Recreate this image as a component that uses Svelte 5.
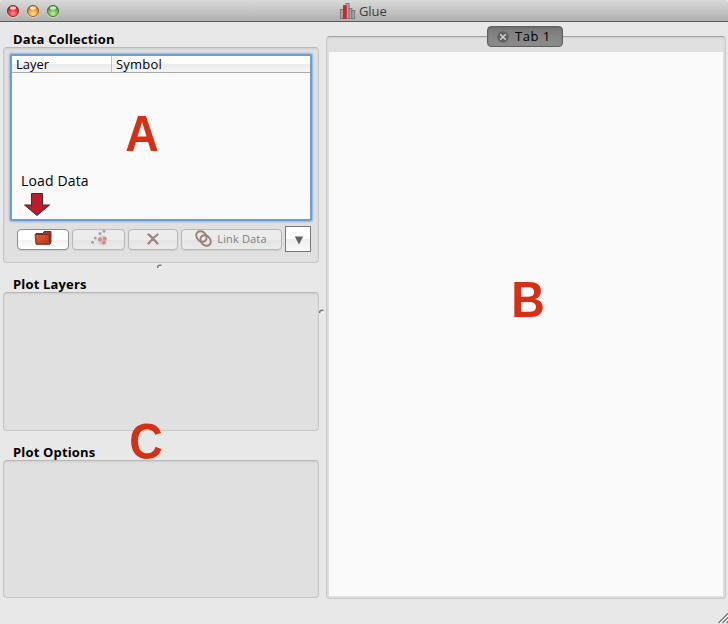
<script>
  const lights = [
    { name: 'close', hi: '#ff8a86', mid: '#ee3d40', edge: '#8c2226' },
    { name: 'minimise', hi: '#ffe08a', mid: '#f0a43c', edge: '#96601f' },
    { name: 'zoom', hi: '#c8f0a0', mid: '#76bd58', edge: '#3f762d' }
  ];
</script>

<div class="window">
  <header class="titlebar">
    <div class="lights">
      {#each lights as l}
        <svg width="14" height="14" viewBox="0 0 14 14" aria-label={l.name}>
          <defs>
            <radialGradient id={l.name} cx=".5" cy=".75" r=".7">
              <stop offset="0" stop-color={l.hi} />
              <stop offset=".55" stop-color={l.mid} />
              <stop offset="1" stop-color={l.edge} />
            </radialGradient>
          </defs>
          <circle cx="7" cy="7.6" r="6.2" fill="#ddd" />
          <circle cx="7" cy="7" r="5.6" fill="url(#{l.name})" stroke={l.edge} stroke-width=".9" />
          <ellipse cx="7" cy="4" rx="3" ry="1.7" fill="#fff" opacity=".75" />
        </svg>
      {/each}
    </div>
    <div class="title">
      <svg width="16" height="17" viewBox="0 0 16 17">
        <g stroke="#707070" stroke-width=".8" fill="#a6a6a6">
          <rect x=".5" y="6.5" width="2.8" height="9" />
          <rect x="6.1" y=".5" width="3" height="15" />
          <rect x="9.1" y="5.5" width="2.8" height="10" />
          <rect x="11.9" y="7.5" width="2.8" height="8" />
          <rect x="3.4" y="2.6" width="2.7" height="12.9" fill="#f5161f" stroke="#d01c22" />
        </g>
      </svg>
      <span>Glue</span>
    </div>
  </header>

  <main>
    <aside>
      <h2 class="first">Data Collection</h2>
      <section class="panel data">
        <div class="table">
          <div class="thead"><span class="layer">Layer</span><span class="symbol">Symbol</span></div>
          <div class="tbody">
            <div class="load">Load Data</div>
            <svg class="arrow" width="28" height="25" viewBox="0 0 28 25">
              <path d="M8.5 1.5H19.5V13H26.5L14 23.5L1.5 13H8.5Z" fill="#bd1a2b" stroke="#333" stroke-width="1" />
            </svg>
          </div>
        </div>
        <div class="buttons">
          <button class="open" aria-label="Open">
            <svg width="18" height="16" viewBox="0 0 18 16">
              <defs><linearGradient id="folder" x2="1" y2="1"><stop stop-color="#e05a38" /><stop offset="1" stop-color="#b8351c" /></linearGradient></defs>
              <path d="M2 3.5H9L10 1.5H17V12L16 14H2Z" fill="#a8371f" stroke="#592014" stroke-width=".8" />
              <path d="M1 4.5H14.8L16 14.2H2.2Z" fill="url(#folder)" stroke="#60251a" stroke-width=".8" />
            </svg>
          </button>
          <button class="subset" aria-label="New subset">
            <svg width="20" height="18" viewBox="0 0 20 18">
              <circle cx="12.4" cy="11.5" r="5" fill="#d5d1d0" />
              <g fill="#a3a3a3"><circle cx="2.5" cy="13.3" r="1.5" /><circle cx="5.3" cy="9" r="1.5" /><circle cx="10" cy="4.4" r="1.5" /><circle cx="14" cy="2.3" r="1.5" /></g>
              <g fill="#dc8b80"><circle cx="10" cy="10.5" r="2" /><circle cx="14.7" cy="9.8" r="2" /><circle cx="13.7" cy="13.5" r="2.1" /></g>
            </svg>
          </button>
          <button class="delete" aria-label="Delete">
            <svg width="12" height="12" viewBox="0 0 12 12"><path d="M1.5 1.5Q5 4 10.5 10.5M10.5 1.5Q6 5 1.5 10.5" fill="none" stroke="#a2827c" stroke-width="2.2" stroke-linecap="round" /></svg>
          </button>
          <button class="link">
            <svg width="18" height="18" viewBox="0 0 18 18"><g fill="none" stroke="#9b8079" stroke-width="1.9"><ellipse cx="6.4" cy="6.5" rx="4.6" ry="5.8" transform="rotate(-42 6.4 6.5)" /><ellipse cx="10.6" cy="10.5" rx="4.6" ry="5.8" transform="rotate(-42 10.6 10.5)" /></g></svg>
            <span>Link Data</span>
          </button>
          <button class="more" aria-label="More">
            <svg width="10" height="9" viewBox="0 0 10 9"><path d="M.8.5H9.2L5 8.5Z" fill="#626262" /></svg>
          </button>
        </div>
      </section>
      <h2 class="layers">Plot Layers</h2>
      <section class="panel plot"></section>
      <h2 class="options">Plot Options</h2>
      <section class="panel plot last"></section>
    </aside>
    <section class="workspace">
      <div class="canvas"></div>
      <div class="tab">
        <svg width="12" height="12" viewBox="0 0 12 12"><circle cx="6" cy="6" r="5.8" fill="#616161" /><path d="M3.2 3.2L8.8 8.8M8.8 3.2L3.2 8.8" stroke="#d0d0d0" stroke-width="1.5" /></svg>
        <span>Tab 1</span>
      </div>
    </section>
  </main>

  <svg class="grip h" width="6" height="5" viewBox="0 0 6 5"><path d="M.7 4V2.5Q1.5.8 4.5 1.5" fill="none" stroke="#777" stroke-width="1.5" /><path d="M2 4L5 3" stroke="#fff" /></svg>
  <svg class="grip v" width="6" height="5" viewBox="0 0 6 5"><path d="M.7 4V2.5Q1.5.8 4.5 1.5" fill="none" stroke="#777" stroke-width="1.5" /><path d="M2 4L5 3" stroke="#fff" /></svg>
  <svg class="resize" width="10" height="11" viewBox="0 0 10 11"><path d="M.5 10L10 .5M4.5 10L10 4.5M8.5 10L10 8.5" stroke="#666" stroke-width="1.1" /><path d="M2 10L10 2M6 10L10 6" stroke="#fff" stroke-width=".8" /></svg>

  <span class="mark a">A</span>
  <span class="mark b">B</span>
  <span class="mark c">C</span>
</div>

<style>
  .window { position: relative; width: 728px; height: 624px; overflow: hidden; background: #e8e8e8; color: #000; font: 13px/16px "Open Sans", "Noto Sans", sans-serif; }
  .window * { box-sizing: border-box; }
  svg { display: block; flex: none; }
  .titlebar { height: 22px; display: flex; align-items: flex-start; border-bottom: 1px solid #5b5b5b; background: linear-gradient(#d9d9d9, #b0b0b0); border-radius: 4px 4px 0 0; }
  .lights { display: flex; gap: 6px; padding: 4px 0 0 6px; width: 340px; }
  .title { display: flex; gap: 3px; padding-top: 3px; color: #3c3c3c; }
  .title span { line-height: 17px; font-size: 13px; letter-spacing: -.1px; }
  main { display: flex; height: 602px; }
  aside { width: 326px; padding-left: 3px; }
  h2 { margin: 0 0 0 10px; font-size: 13px; line-height: 16px; font-weight: 700; letter-spacing: .16px; white-space: nowrap; }
  .first { padding-top: 9px; height: 26px; }
  .layers { padding-top: 13px; height: 29px; }
  .options { padding-top: 13px; height: 29px; }
  .panel { width: 316px; background: #e0e0e0; border: 1px solid #c6c6c6; border-top-color: #b8b8b8; border-radius: 4px; box-shadow: inset 0 1px 2px #cfcfcf; }
  .data { height: 216px; margin-top: -1px; padding: 6px 0 0 6px; }
  .plot { height: 139px; }
  .last { height: 138px; }
  .table { width: 302px; height: 167px; border: 2px solid #6a9fd2; border-radius: 2px; box-shadow: 0 0 2px 1px #8fb5dc; background: #fafafa; }
  .thead { display: flex; height: 17px; background: linear-gradient(#fff 0 50%, #ececec 52%, #f5f5f5); border-bottom: 1px solid #aaa; line-height: 17px; }
  .layer { width: 100px; padding-left: 4px; border-right: 1px solid #c0c0c0; }
  .symbol { padding-left: 4px; letter-spacing: .2px; }
  .load { padding: 99px 0 0 9px; font-size: 14px; line-height: 18px; letter-spacing: .15px; }
  .arrow { margin: 2px 0 0 11px; }
  .buttons { display: flex; align-items: center; height: 26px; margin: 5px 0 0 7px; }
  button { height: 21px; margin: 0 3px 0 0; padding: 0; display: flex; align-items: center; justify-content: center; border: 1px solid #b7b7b7; border-radius: 4px; background: linear-gradient(#ececec 0 50%, #e3e3e3 51%, #ebebeb); color: #7f7f7f; font: 11px/16px "Open Sans", "Noto Sans", sans-serif; box-shadow: 0 1px 1px #cfcfcf; }
  .open { width: 52px; border-color: #8d8d8d; background: linear-gradient(#fff 0 50%, #f0f0f0 52%, #fff); }
  .open svg { margin-top: -2px; }
  .subset { width: 53px; }
  .subset svg { margin: -2px 0 0 2px; }
  .delete { width: 50px; }
  .delete svg { margin-top: -1px; }
  .link { width: 101px; gap: 4px; letter-spacing: .15px; }
  .link svg { margin: -1px 0 0 -1px; }
  .link span { margin-top: -1px; white-space: nowrap; }
  .more { width: 26px; height: 26px; border: 1px solid #777; border-radius: 0; background: linear-gradient(#fff 0 50%, #ededed 51%, #fafafa); margin: 0; box-shadow: none; }
  .more svg { margin: 3px 0 0 2px; }
  .workspace { position: relative; width: 400px; height: 563px; margin-top: 14px; padding: 15px 2px 2px; background: #e0e0e0; border: 1px solid #c8c8c8; border-top-color: #a0a0a0; border-radius: 4px; box-shadow: inset 0 1px 2px #cfcfcf; }
  .canvas { height: 544px; background: #fafafa; }
  .tab { position: absolute; left: 160px; top: -11px; width: 76px; height: 21px; padding-left: 9px; display: flex; align-items: center; gap: 6px; border: 1px solid #5f5f5f; border-radius: 4px; background: linear-gradient(#777, #858585 50%, #8c8c8c); box-shadow: inset 0 1px 2px #6a6a6a; }
  .tab span { margin-top: -1px; letter-spacing: .5px; white-space: nowrap; }
  .grip { position: absolute; }
  .h { left: 157px; top: 264px; }
  .v { left: 319px; top: 309px; }
  .resize { position: absolute; right: 0; bottom: 0; }
  .mark { position: absolute; font: bold 50px/56px "Liberation Sans", Arial, sans-serif; color: #d82e13; transform: scaleX(.93); }
  .a { left: 124px; top: 106px; }
  .b { left: 510px; top: 272px; }
  .c { left: 128px; top: 414px; }
</style>
